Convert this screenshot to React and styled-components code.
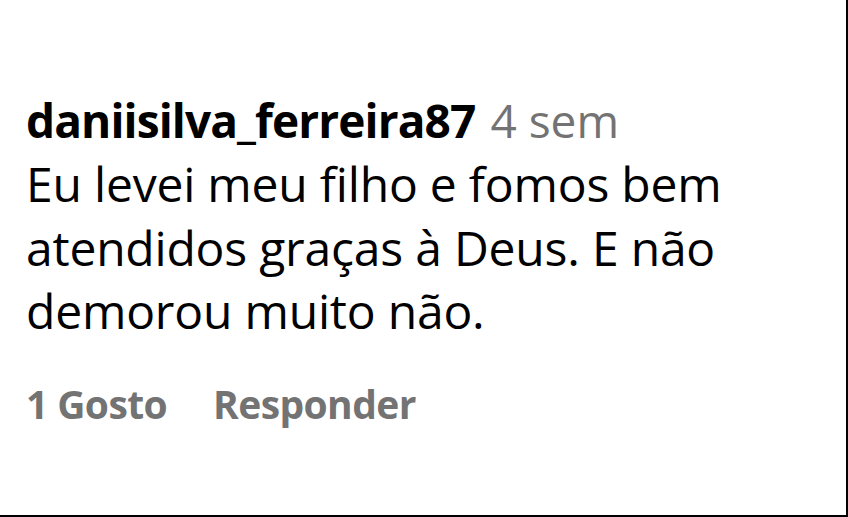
import React from 'react';
import styled, { createGlobalStyle } from 'styled-components';

const GlobalStyle = createGlobalStyle`
  html, body {
    margin: 0;
    padding: 0;
    background: #ffffff;
  }
  body {
    font-family: "Open Sans", "Noto Sans", "Liberation Sans", sans-serif;
  }
`;

const Frame = styled.div`
  box-sizing: border-box;
  width: 848px;
  height: 517px;
  border-right: 2px solid #000;
  border-bottom: 2px solid #000;
  background: #fff;
  padding: 88px 0 0 26px;
`;

const Comment = styled.article`
  display: flex;
  flex-direction: column;
`;

const Header = styled.div`
  display: flex;
  align-items: baseline;
  gap: 15px;
  font-size: 46px;
  line-height: 64px;
`;

const Username = styled.span`
  font-weight: 700;
  color: #000;
  letter-spacing: -0.9px;
`;

const Time = styled.span`
  color: #737373;
`;

const Body = styled.p`
  margin: 0;
  font-size: 48px;
  line-height: 63.5px;
  color: #000;
  letter-spacing: -0.2px;
  max-width: 760px;
`;

const Actions = styled.div`
  display: flex;
  gap: 46px;
  margin-top: 34px;
`;

const Action = styled.button`
  border: 0;
  background: none;
  padding: 0;
  font-family: inherit;
  font-size: 39px;
  font-weight: 700;
  color: #737373;
  letter-spacing: -0.6px;
  cursor: pointer;
`;

export default function App() {
  return (
    <>
      <GlobalStyle />
      <Frame>
        <Comment>
          <Header>
            <Username>daniisilva_ferreira87</Username>
            <Time>4 sem</Time>
          </Header>
          <Body>
            Eu levei meu filho e fomos bem
            <br />
            atendidos graças à Deus. E não
            <br />
            demorou muito não.
          </Body>
          <Actions>
            <Action>1 Gosto</Action>
            <Action>Responder</Action>
          </Actions>
        </Comment>
      </Frame>
    </>
  );
}
